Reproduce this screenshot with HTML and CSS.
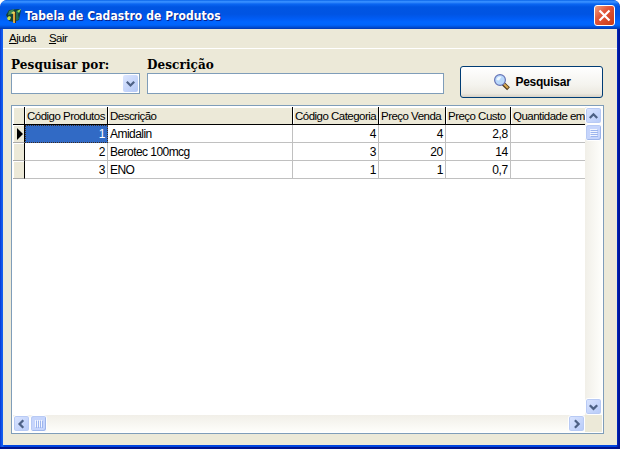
FILE: index.html
```html
<!DOCTYPE html>
<html lang="pt-BR">
<head>
<meta charset="utf-8">
<title>Tabela de Cadastro de Produtos</title>
<link rel="stylesheet" href="styles.css">
</head>
<body>
<div class="window">
  <header class="titlebar">
    <svg class="app-icon" width="16" height="16" viewBox="0 0 16 16">
      <path d="M3 2L12 1L15 2L13 12L8 14L3 13L0 7Z" fill="#14403c"/>
      <path d="M3 3L8 1L6 6L2 7Z" fill="#3f8a58"/>
      <path d="M10 3L13 2L12 7L13 11L10 13Z" fill="#237052"/>
      <path d="M7 4H10V15H7Z" fill="#d9a840"/>
      <path d="M9 4H10V15H9Z" fill="#452f16"/>
      <path d="M5 5L8 3L9 5L7 6Z" fill="#e6d860"/>
      <path d="M1 10L3 8L5 9L4 12L2 12Z" fill="#c8e048"/>
      <path d="M11 3L15 1L13 5Z" fill="#a4e05c"/>
    </svg>
    <h1 class="title">Tabela de Cadastro de Produtos</h1>
    <button class="close" aria-label="Fechar">
      <svg width="19" height="19" viewBox="0 0 19 19"><path d="M4.5 4.5L14.5 14.5M14.5 4.5L4.5 14.5" stroke="#fff" stroke-width="2.2"/></svg>
    </button>
  </header>
  <main class="client">
    <nav class="menu"><span><u>A</u>juda</span><span><u>S</u>air</span></nav>
    <section class="search">
      <div class="field by">
        <label>Pesquisar por:</label>
        <div class="box"><span class="drop"><svg width="15" height="17" viewBox="0 0 15 17"><path d="M3.8 6.8L7.5 10.5L11.2 6.8" fill="none" stroke="#4d6185" stroke-width="2.2"/></svg></span></div>
      </div>
      <div class="field desc">
        <label>Descrição</label>
        <div class="box"></div>
      </div>
      <button class="go">
        <svg width="18" height="17" viewBox="0 0 18 17">
          <path d="M10 9.5L15.5 14.8" stroke="#4a3518" stroke-width="4"/>
          <path d="M10.4 9.5L15 14" stroke="#d8a851" stroke-width="2.2"/>
          <circle cx="7" cy="6" r="5.4" fill="#b9d8fb" stroke="#6673b5" stroke-width="1.2"/>
          <path d="M3.5 6A3.6 3.6 0 0 1 8.5 2.8L6 6.5Z" fill="#eff8ff"/>
        </svg>
        <span>Pesquisar</span>
      </button>
    </section>
    <section class="grid">
      <div class="view">
        <div class="row head">
          <i></i><b>Código Produtos</b><b>Descrição</b><b>Código Categoria</b><b>Preço Venda</b><b>Preço Custo</b><b>Quantidade em</b>
        </div>
        <div class="row">
          <i><svg width="6" height="12" viewBox="0 0 6 12"><path d="M0 0L6 6L0 12Z"/></svg></i><div class="n sel">1</div><div>Amidalin</div><div class="n">4</div><div class="n">4</div><div class="n">2,8</div><div></div>
        </div>
        <div class="row">
          <i></i><div class="n">2</div><div>Berotec 100mcg</div><div class="n">3</div><div class="n">20</div><div class="n">14</div><div></div>
        </div>
        <div class="row">
          <i></i><div class="n">3</div><div>ENO</div><div class="n">1</div><div class="n">1</div><div class="n">0,7</div><div></div>
        </div>
      </div>
      <div class="vbar">
        <span class="sb"><svg width="13" height="14" viewBox="0 0 13 14"><path d="M2.8 9L6.5 5.3L10.2 9" class="chev"/></svg></span>
        <span class="sb thumb"><svg width="8" height="8" viewBox="0 0 8 8"><path d="M0 .5H7M0 2.5H7M0 4.5H7M0 6.5H7" stroke="#f2f6ff"/><path d="M1 1.5H8M1 3.5H8M1 5.5H8M1 7.5H8" stroke="#9db5ee"/></svg></span>
        <span class="sb last"><svg width="13" height="14" viewBox="0 0 13 14"><path d="M2.8 5.2L6.5 8.9L10.2 5.2" class="chev"/></svg></span>
      </div>
      <div class="hbar">
        <span class="sb"><svg width="13" height="14" viewBox="0 0 13 14"><path d="M8.3 3.3L4.6 7L8.3 10.7" class="chev"/></svg></span>
        <span class="sb thumb"><svg width="8" height="8" viewBox="0 0 8 8"><path d="M.5 0V7M2.5 0V7M4.5 0V7M6.5 0V7" stroke="#f2f6ff"/><path d="M1.5 1V8M3.5 1V8M5.5 1V8M7.5 1V8" stroke="#9db5ee"/></svg></span>
        <span class="sb last"><svg width="13" height="14" viewBox="0 0 13 14"><path d="M4.9 3.3L8.6 7L4.9 10.7" class="chev"/></svg></span>
      </div>
      <div class="corner"></div>
    </section>
  </main>
</div>
</body>
</html>
```
FILE: styles.css
```css
* { box-sizing: border-box; }
body { margin: 0; background: #fff; font: 12px/14px "Liberation Sans", sans-serif; color: #000; overflow: hidden; }
button { padding: 0; font: inherit; color: inherit; }
svg { display: block; flex: none; }
.window { width: 620px; height: 449px; padding: 0 3px 4px; display: flex; flex-direction: column; overflow: hidden;
  border-radius: 7px 7px 0 0;
  background: linear-gradient(90deg, #0831c9 0, #0c4fe8 1px, #1663f0 3px, #0046e0 4px, #0046e0 616px, #0019a8 618px, #00138c 620px); box-shadow: inset 0 -2px #00138c; }
.titlebar { height: 29px; margin: 0 -3px; padding: 2px 5px 0 6px; display: flex; align-items: center; flex: none;
  border-radius: 7px 7px 0 0;
  background: linear-gradient(#0058e0 0, #2e8aff 1px, #3a90ff 2px, #0a66f2 4px, #0055e2 7px, #0054e3 14px, #005cf5 19px, #0066ff 22px, #0064fb 25px, #0050d8 27px, #0038b0 29px); }
.title { margin: 0 auto 0 3px; color: #fff; font: bold 12px/16px "DejaVu Sans Condensed", sans-serif; text-shadow: 1px 1px #0a1f88; white-space: nowrap; letter-spacing: .06px; }
.close { width: 21px; height: 21px; border: 1px solid #fff; border-radius: 3px; background: linear-gradient(135deg, #f0a080, #e2563a 40%, #c83a14); display: flex; align-items: center; justify-content: center; }
.client { flex: 1; background: #ece9d8; min-height: 0; display: flex; flex-direction: column; }
.menu { height: 20px; padding: 2px 0 0 6px; display: flex; gap: 13px; border-bottom: 1px solid #fff; flex: none; font-size: 11.5px; letter-spacing: -.5px; }
.menu u { text-underline-offset: 1px; }
.search { height: 56px; padding: 8px 14px 0 8px; display: flex; align-items: flex-start; flex: none; }
.field { display: flex; flex-direction: column; }
.field label { height: 16px; font: bold 12px/16px "DejaVu Serif", serif; white-space: nowrap; letter-spacing: .1px; }
.by { width: 129px; margin-right: 7px; }
.desc { width: 297px; }
.box { height: 21px; border: 1px solid #7f9db9; background: #fff; padding: 1px; display: flex; justify-content: flex-end; }
.drop { width: 15px; height: 17px; border-radius: 2px; background: linear-gradient(135deg, #dce6ff, #b4c8f6); }
.go { width: 143px; height: 32px; margin: 9px 0 0 auto; padding-left: 1px; border: 1px solid #003c74; border-radius: 3px; background: linear-gradient(#fff, #f4f3ee 60%, #ece9e0 88%, #d6d0c5); display: flex; align-items: center; justify-content: center; gap: 4px; font: bold 12px/14px "Liberation Sans", sans-serif; letter-spacing: -.25px; }
.grid { width: 593px; height: 329px; margin-left: 8px; border: 1px solid #7f9db9; padding: 1px; background: #fff; display: grid; grid-template: 308px 17px / 572px 17px; flex: none; }
.view { overflow: hidden; }
.row { display: grid; grid-template-columns: 12px 83px 185px 86px 67px 65px 74px; height: 18px; }
.row > * { border-right: 1px solid #c0c0c0; border-bottom: 1px solid #c0c0c0; padding: 2px 2px 0; white-space: nowrap; overflow: hidden; font-size: 12px; letter-spacing: -.55px; }
.row > :last-child { border-right: 0; }
.row > i { border-color: #000; background: #ece9d8; box-shadow: inset 1px 1px #fff; padding: 3px 0 0 4px; border-bottom-color: #aaa; }
.row > b { font-weight: normal; font-size: 11.5px; letter-spacing: -.52px; background: #ece9d8; border-color: #000; box-shadow: inset 1px 1px #fff; }
.head > i { border-color: #000; }
.row > .n { text-align: right; letter-spacing: -.3px; }
.row > .sel { background: #316ac5; color: #fff; border: 1px dotted #3a2a20; padding: 1px 2px 0; }
.vbar, .hbar { display: flex; background: linear-gradient(90deg, #f1efe8, #fefefb); }
.vbar { flex-direction: column; }
.hbar { background: linear-gradient(#f1efe8, #fefefb); }
.sb { width: 17px; height: 17px; border: 1px solid #fff; border-radius: 3px; background: linear-gradient(135deg, #dbe5ff, #b6caf8); box-shadow: inset 0 0 0 1px #b8caf4; display: flex; align-items: center; justify-content: center; flex: none; }
.thumb { background: #c6d5fc; box-shadow: inset -1px -1px #9db5ea, inset 1px 1px #b8caf4; }
.last { margin-top: auto; }
.hbar .last { margin: 0 0 0 auto; }
.chev { fill: none; stroke: #4d6185; stroke-width: 2.3; }
.corner { background: #ece9d8; }
```
